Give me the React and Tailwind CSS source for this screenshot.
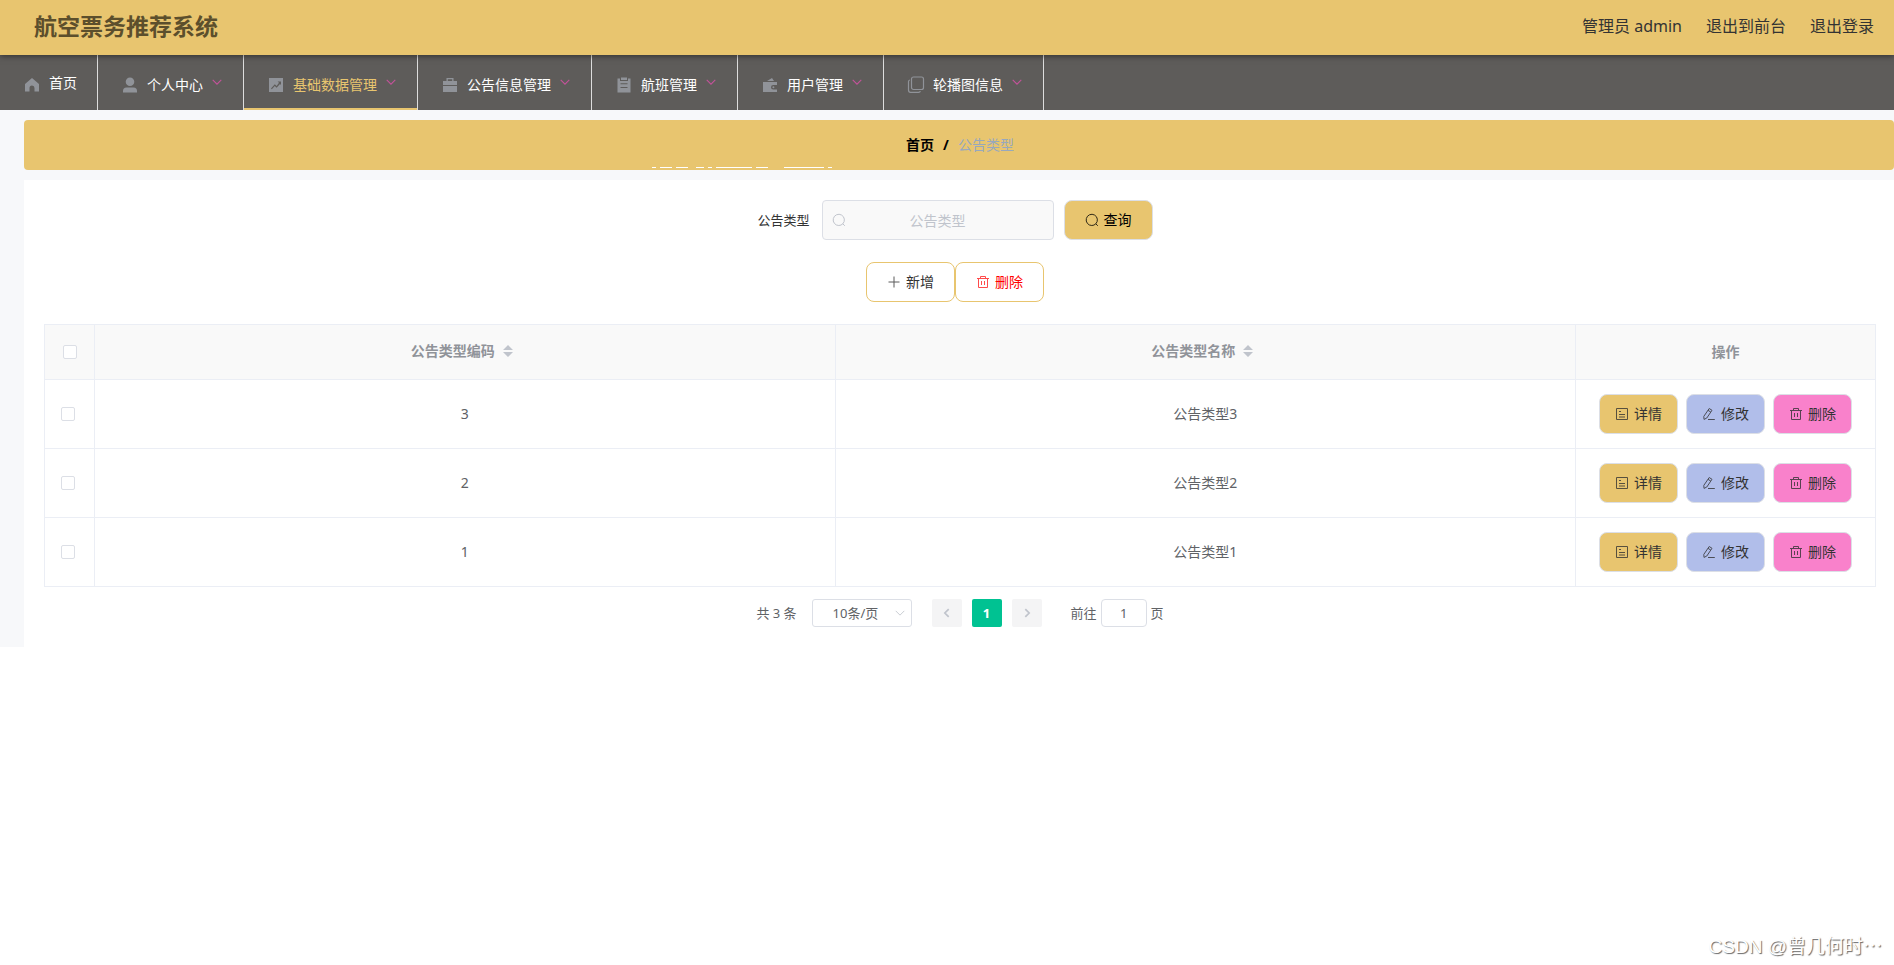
import React from "react";

const menus = [
  { label: "首页", icon: "home" },
  { label: "个人中心", icon: "user", sub: true },
  { label: "基础数据管理", icon: "chart", sub: true, active: true },
  { label: "公告信息管理", icon: "case", sub: true },
  { label: "航班管理", icon: "order", sub: true },
  { label: "用户管理", icon: "wallet", sub: true },
  { label: "轮播图信息", icon: "copy", sub: true },
];

const rows = [
  { code: "3", name: "公告类型3" },
  { code: "2", name: "公告类型2" },
  { code: "1", name: "公告类型1" },
];

const solidIcons = {
  home: "M9 2 L16 8 V15.5 H11.5 V12 A2.5 2.5 0 0 0 6.5 12 V15.5 H2 V8 Z",
  user: "M9 1.5 a4.3 4.3 0 0 1 0 8.6 a4.3 4.3 0 0 1 0 -8.6 Z M2 16.5 V15 a3.5 3.5 0 0 1 3.5 -3.5 H12.5 a3.5 3.5 0 0 1 3.5 3.5 V16.5 Z",
  chart: "M2 2 H16 V16 H2 Z M4 12.4 L4.8 13.2 L7.8 10 L9.6 11.8 L13 8 L14 9 V5.4 H10.6 L12 6.8 L9.6 10 L7.8 8.2 Z",
  case: "M5.5 2 H12.5 V5 H16 V9 H2 V5 H5.5 Z M6.8 3.2 V5 H11.2 V3.2 Z M2 10 H16 V16 H2 Z",
  order: "M6 1.5 H12 V4 H6 Z M2.5 2.5 H5 V5 H13 V2.5 H15.5 V16.5 H2.5 Z M5.5 7.2 V8.3 H12.5 V7.2 Z M5.5 11 V12.1 H12.5 V11 Z",
  wallet: "M2 6 H16 V9 H12.3 A2.3 2.3 0 0 0 12.3 13.6 H16 V16 H2 Z M12.4 10.3 a1 1 0 1 1 0 2 a1 1 0 1 1 0 -2 Z M6 5 L11 2 L13 5 Z",
};

const MenuIcon = ({ name }) => {
  if (name === "copy") {
    return (
      <svg viewBox="0 0 18 18" className="w-[18px] h-[18px]" fill="none" stroke="currentColor" strokeWidth="1.2">
        <rect x="4.5" y="1" width="12" height="12.5" rx="2" />
        <path d="M3 4 C1.8 4.2 1.5 4.7 1.5 5.5 V14 C1.5 15.8 2.2 16.4 3.5 16.4 H11.5 C12.6 16.4 13.2 16 13.4 15.2" />
      </svg>
    );
  }
  return (
    <svg viewBox="0 0 18 18" className="w-[18px] h-[18px]" fill="currentColor" fillRule="evenodd">
      <path d={solidIcons[name]} />
    </svg>
  );
};

const lineIcons = {
  search: "M10.8 10.8 A5.6 5.6 0 1 0 6.8 12.5 A5.6 5.6 0 0 0 10.8 10.8 L12.8 12.8",
  plus: "M7 1.5 V12.5 M1.5 7 H12.5",
  trash: "M1 3.5 H13 M4.5 3.5 V1.5 H9.5 V3.5 M2.5 3.5 V12.5 H11.5 V3.5 M5.5 6 V10 M8.5 6 V10",
  detail: "M1.5 1.5 H12.5 V12.5 H1.5 Z M4 4.5 H6 M4 7.5 H10 M4 10 H10",
  edit: "M2 12.4 L1.8 9.4 L7.2 1.5 L10 3.3 L4.8 11 Z M6 3.3 L8.8 5.1 M6 12.5 H12.8",
  down: "M2 4.5 L7 9.5 L12 4.5",
  left: "M9 2.5 L4.5 7 L9 11.5",
  right: "M5 2.5 L9.5 7 L5 11.5",
};

const LineIcon = ({ name, className = "w-[14px] h-[14px]", width = 1 }) => (
  <svg viewBox="0 0 14 14" className={className} fill="none" stroke="currentColor" strokeWidth={width}>
    <path d={lineIcons[name]} />
  </svg>
);

const SortCaret = () => (
  <svg viewBox="0 0 10 12" className="w-[10px] h-3" fill="#c0c4cc">
    <path d="M5 0 L10 5 H0 Z M0 7 H10 L5 12 Z" />
  </svg>
);

const SortHeader = ({ children }) => (
  <div className="flex items-center justify-center gap-2 pr-[6px] pb-[2px]">
    {children} <SortCaret />
  </div>
);

const Checkbox = ({ label }) => (
  <input
    type="checkbox"
    aria-label={label}
    className="block appearance-none w-[14px] h-[14px] rounded-xs border border-[#dcdfe6] bg-white checked:bg-[#00c292]"
  />
);

const RowButton = ({ icon, children, className }) => (
  <button
    type="button"
    className={`flex items-center justify-center gap-[5px] w-[79px] h-10 rounded-lg border border-[#dcdfe6] text-[#333] ${className}`}
  >
    <LineIcon name={icon} className="w-[14px] h-[14px] opacity-80" />
    <span>{children}</span>
  </button>
);

// White strokes of the clipped caption at the bottom edge of the breadcrumb
const CaptionEdge = () => (
  <svg viewBox="0 0 180 1" className="absolute left-[628px] bottom-[2px] w-[180px] h-px" fill="#fff">
    <path d="M0 0h4v1h-4z M8 0h12v1h-12z M24 0h12v1h-12z M44 0h8v1h-8z M56 0h4v1h-4z M64 0h36v1h-36z M104 0h12v1h-12z M132 0h40v1h-40z M176 0h4v1h-4z" />
  </svg>
);

export default function App() {
  return (
    <div className="min-h-screen flex flex-col bg-white text-sm leading-5 text-[#606266] font-['Noto_Sans','Noto_Sans_CJK_SC',sans-serif]">
      {/* Header */}
      <header className="relative z-10 flex items-center justify-between h-[55px] pl-[34px] pr-5 pb-1 bg-[#e8c56f] shadow-[0_1px_6px_rgba(0,0,0,0.5)]">
        <h1 className="text-[23px] leading-8 font-bold text-[#5c4f2c]">航空票务推荐系统</h1>
        <div className="flex items-center gap-6 text-base text-[#333]">
          <span>管理员 admin</span>
          <a href="#front">退出到前台</a>
          <a href="#logout">退出登录</a>
        </div>
      </header>

      {/* Menu */}
      <nav className="flex h-[55px] bg-[#5e5c5a] text-white">
        {menus.map((m) => (
          <a
            key={m.label}
            href="#menu"
            className={`flex items-center border-r border-r-[#ddd] pl-5 pr-5 ${
              m.active ? "text-[#e8c56f] shadow-[inset_0_-2px_0_#e8c56f]" : ""
            }`}
          >
            <span className="flex justify-center w-6 mr-[5px] pt-1 text-[#909399]">
              <MenuIcon name={m.icon} />
            </span>
            <span className={m.sub ? "pt-1" : ""}>{m.label}</span>
            {m.sub && (
              <span className="ml-2 pb-[2px] text-[#c4529a]">
                <LineIcon name="down" className="w-3 h-3" width={1.3} />
              </span>
            )}
          </a>
        ))}
      </nav>

      {/* Page body */}
      <main className="bg-[#f7f8fa] pl-6 pt-[10px]">
        <div className="relative flex items-center justify-center gap-[9px] h-[50px] pl-[2px] mb-[10px] rounded bg-[#e8c56f]">
          <a href="#home" className="font-bold text-black">首页</a>
          <span className="font-bold text-black">/</span>
          <span className="text-[#97a8be]">公告类型</span>
          <CaptionEdge />
        </div>

        <section className="bg-white pt-5 pl-5 pr-[18px] pb-5">
          <form className="flex items-center justify-center pr-[10px] mb-[22px]">
            <label htmlFor="type" className="mr-3 text-[13px] text-[#333]">公告类型</label>
            <div className="relative mr-[10px]">
              <span className="absolute left-[10px] top-[13px] text-[#c0c4cc]">
                <LineIcon name="search" />
              </span>
              <input
                id="type"
                type="text"
                placeholder="公告类型"
                className="block w-[232px] h-10 pl-[30px] pr-[30px] rounded border border-[#dcdfe6] bg-[#f9f9f9] text-center placeholder:text-[#c0c4cc]"
              />
            </div>
            <button
              type="button"
              className="flex items-center justify-center gap-[5px] w-[89px] h-10 rounded-lg border border-[#dcdfe6] bg-[#e8c56f] text-black"
            >
              <LineIcon name="search" className="w-[14px] h-[14px] opacity-80" />
              <span>查询</span>
            </button>
          </form>

          <div className="flex justify-center pr-[10px] mb-[22px]">
            <button type="button" className="flex items-center justify-center gap-[5px] w-[89px] h-10 rounded-lg border border-[#e8c56f] text-[#333]">
              <LineIcon name="plus" className="w-[14px] h-[14px] opacity-80" />
              <span>新增</span>
            </button>
            <button type="button" className="flex items-center justify-center gap-[5px] w-[89px] h-10 rounded-lg border border-[#e8c56f] text-[#f00]">
              <LineIcon name="trash" className="w-[14px] h-[14px] opacity-70" />
              <span>删除</span>
            </button>
          </div>

          {/* Table */}
          <table className="w-full table-fixed border-collapse text-center [&_th]:border [&_td]:border [&_th]:border-[#ebeef5] [&_td]:border-[#ebeef5]">
            <thead>
              <tr className="h-[55px] bg-[#f9f9f9] text-[#909399]">
                <th className="w-[50px] pl-[18px]">
                  <Checkbox label="全选" />
                </th>
                <th>
                  <SortHeader>公告类型编码</SortHeader>
                </th>
                <th>
                  <SortHeader>公告类型名称</SortHeader>
                </th>
                <th className="w-[300px]">操作</th>
              </tr>
            </thead>
            <tbody>
              {rows.map((row) => (
                <tr key={row.code} className="h-[69px]">
                  <td className="pl-4">
                    <Checkbox label={row.name} />
                  </td>
                  <td>{row.code}</td>
                  <td>{row.name}</td>
                  <td>
                    <div className="flex justify-center gap-2">
                      <RowButton icon="detail" className="bg-[#e8c56f]">详情</RowButton>
                      <RowButton icon="edit" className="bg-[#b1beea]">修改</RowButton>
                      <RowButton icon="trash" className="bg-[#f981cb]">删除</RowButton>
                    </div>
                  </td>
                </tr>
              ))}
            </tbody>
          </table>

          {/* Pagination */}
          <div className="flex items-center justify-center h-7 mt-3 text-[13px]">
            <span className="mr-[15px]">共 3 条</span>
            <div className="relative mr-5">
              <select
                aria-label="每页条数"
                className="block appearance-none w-[100px] h-7 pl-5 pr-6 rounded-[3px] border border-[#dcdfe6] bg-white"
              >
                <option>10条/页</option>
              </select>
              <span className="absolute right-[6px] top-2 pointer-events-none text-[#c0c4cc]">
                <LineIcon name="down" className="w-3 h-3" />
              </span>
            </div>
            <div className="flex gap-[10px] mr-[29px]">
              <button type="button" aria-label="上一页" className="flex items-center justify-center w-[30px] h-7 rounded-xs bg-[#f4f4f5] text-[#c0c4cc]">
                <LineIcon name="left" className="w-3 h-3" width={2} />
              </button>
              <button type="button" className="w-[30px] h-7 rounded-xs bg-[#00c292] font-bold text-white">1</button>
              <button type="button" aria-label="下一页" className="flex items-center justify-center w-[30px] h-7 rounded-xs bg-[#f4f4f5] text-[#c0c4cc]">
                <LineIcon name="right" className="w-3 h-3" width={2} />
              </button>
            </div>
            <label htmlFor="jump">前往</label>
            <input
              id="jump"
              type="text"
              defaultValue="1"
              className="w-[46px] h-7 ml-1 mr-1 rounded border border-[#dcdfe6] bg-white text-center"
            />
            <span>页</span>
          </div>
        </section>
      </main>

      <footer className="mt-auto pr-3 pb-1 text-right text-[19px] leading-7 text-white [text-shadow:1px_1px_1px_#666] font-['Liberation_Sans','Noto_Sans_CJK_SC',sans-serif]">
        CSDN @曾几何时⋯
      </footer>
    </div>
  );
}
